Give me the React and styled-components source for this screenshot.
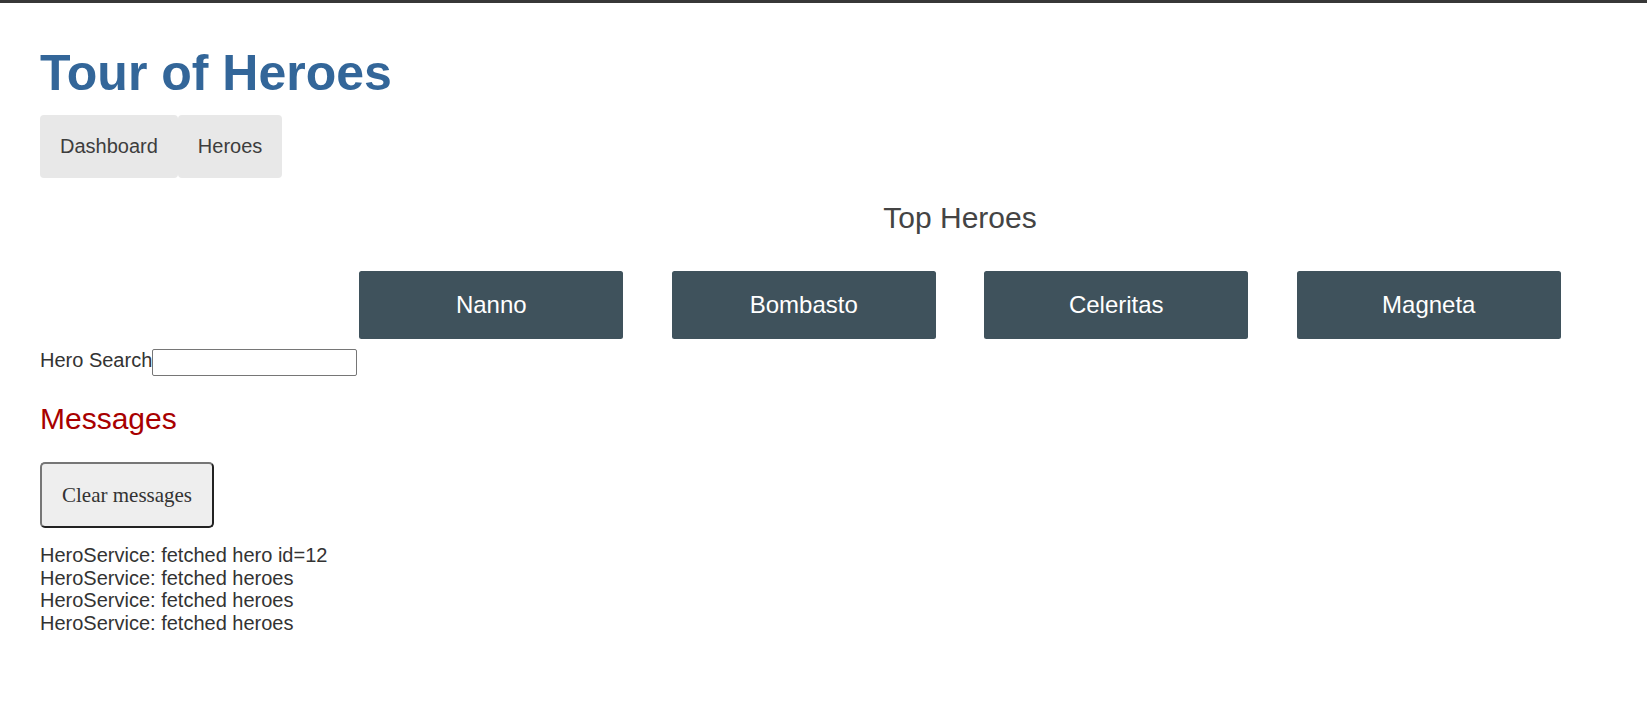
import React from "react";
import styled, { createGlobalStyle } from "styled-components";

const GlobalStyle = createGlobalStyle`
  html, body {
    margin: 0;
    padding: 0;
    background: #fff;
  }
  body {
    color: #333;
    font-family: "Liberation Sans", Arial, sans-serif;
  }
  * { box-sizing: border-box; }
`;

const TopBar = styled.div`
  height: 3px;
  background: #383838;
`;

const Page = styled.div`
  padding: 0 40px 40px 40px;
`;

const Title = styled.h1`
  margin: 41px 0 0 0;
  font-family: "Liberation Sans", Arial, sans-serif;
  font-weight: bold;
  font-size: 50px;
  line-height: 58px;
  color: #369;
`;

const Nav = styled.nav`
  display: flex;
  gap: 0;
  margin-top: 13px;
`;

const NavLink = styled.a`
  display: block;
  padding: 20px;
  font-size: 20px;
  line-height: 23px;
  background: #e8e8e8;
  color: #3d3d3d;
  border-radius: 4px;
  text-decoration: none;
  cursor: pointer;
`;

const Dashboard = styled.section`
  margin-left: 295px;
  width: 1250px;
`;

const SectionTitle = styled.h2`
  margin: ${(p) => p.$mt}px 0 ${(p) => p.$mb}px 0;
  font-family: "Liberation Sans", Arial, sans-serif;
  font-weight: normal;
  font-size: 30px;
  line-height: 34px;
  color: ${(p) => p.$color || "#444"};
  text-align: ${(p) => p.$align || "left"};
`;

const HeroMenu = styled.div`
  display: flex;
  justify-content: space-around;
  align-items: flex-start;
`;

const HeroTile = styled.a`
  display: block;
  width: 264px;
  margin: 10px 0;
  padding: 20px;
  background: #3f525c;
  border-radius: 2.5px;
  color: #fff;
  font-size: 24px;
  line-height: 28px;
  text-align: center;
  text-decoration: none;
  cursor: pointer;
`;

const SearchRow = styled.div`
  display: flex;
  align-items: flex-start;
`;

const SearchLabel = styled.label`
  font-size: 20px;
  line-height: 23px;
  color: #333;
`;

const SearchInput = styled.input`
  width: 205px;
  height: 27px;
  margin: 0;
  padding: 1px 2px;
  border: 1px solid #767676;
  border-radius: 2px;
  background: #fff;
  font-family: "Liberation Serif", serif;
  font-size: 17px;
  color: #333;
`;

const ClearButton = styled.button`
  display: block;
  margin: 0;
  padding: 20px;
  font-family: "Liberation Serif", "Times New Roman", serif;
  font-size: 21px;
  line-height: 22px;
  color: #333;
  background: #eee;
  border: 2px solid;
  border-color: #767676 #222 #222 #767676;
  border-radius: 5px;
  cursor: pointer;
`;

const MessageList = styled.div`
  margin-top: 16px;
`;

const MessageLine = styled.div`
  font-size: 20px;
  line-height: 22.7px;
  color: #333;
`;

const heroes = ["Nanno", "Bombasto", "Celeritas", "Magneta"];
const messages = [
  "HeroService: fetched hero id=12",
  "HeroService: fetched heroes",
  "HeroService: fetched heroes",
  "HeroService: fetched heroes",
];

export default function App() {
  return (
    <>
      <GlobalStyle />
      <TopBar />
      <Page>
        <Title>Tour of Heroes</Title>
        <Nav>
          <NavLink>Dashboard</NavLink>
          <NavLink>Heroes</NavLink>
        </Nav>
        <Dashboard>
          <SectionTitle $mt={23} $mb={26} $align="center">
            Top Heroes
          </SectionTitle>
          <HeroMenu>
            {heroes.map((h) => (
              <HeroTile key={h}>{h}</HeroTile>
            ))}
          </HeroMenu>
        </Dashboard>
        <SearchRow>
          <SearchLabel htmlFor="search-box">Hero Search</SearchLabel>
          <SearchInput id="search-box" type="text" />
        </SearchRow>
        <SectionTitle $mt={26} $mb={26} $color="#A80000">
          Messages
        </SectionTitle>
        <ClearButton>Clear messages</ClearButton>
        <MessageList>
          {messages.map((m, i) => (
            <MessageLine key={i}>{m}</MessageLine>
          ))}
        </MessageList>
      </Page>
    </>
  );
}
